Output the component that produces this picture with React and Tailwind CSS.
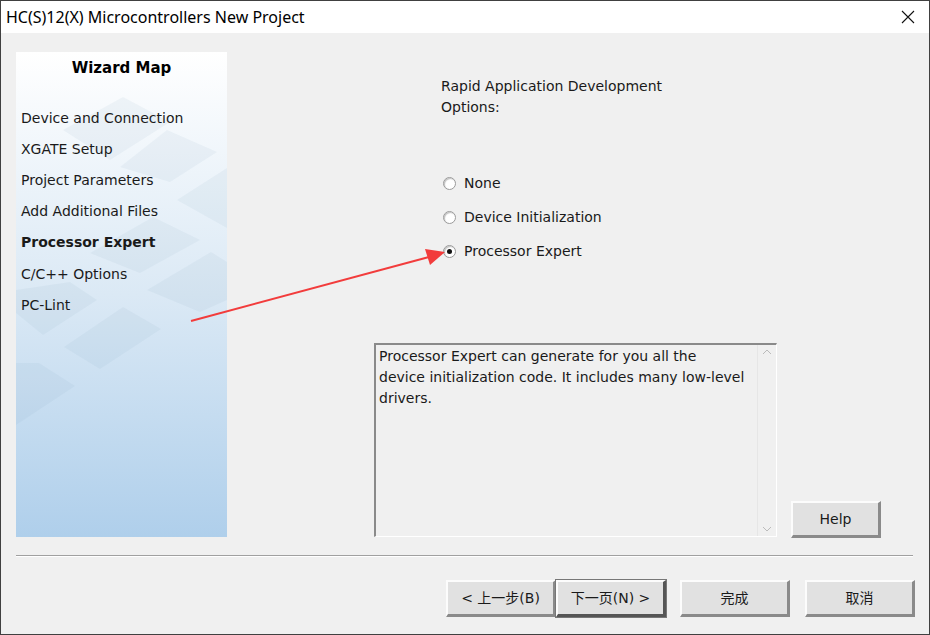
import React from "react";

/* ===============================
   WIZARD DIALOG — Processor Expert page
=============================== */
const ui = { fontFamily: "Tahoma, 'DejaVu Sans', 'Noto Sans CJK SC', sans-serif" };

const steps = [
  "Device and Connection",
  "XGATE Setup",
  "Project Parameters",
  "Add Additional Files",
  "Processor Expert",
  "C/C++ Options",
  "PC-Lint",
];

function Radio({ checked, label }) {
  return (
    <div className="flex items-center h-[20px]">
      <span className="w-[13px] h-[13px] rounded-full border border-[#9a9a9a] bg-white flex items-center justify-center shadow-[inset_1px_1px_1px_rgba(0,0,0,0.25)]">
        {checked && <span className="w-[5px] h-[5px] rounded-full bg-[#111]" />}
      </span>
      <span className="ml-[8px] text-[14px] text-[#1a1a1a]">{label}</span>
    </div>
  );
}

function Btn({ children, def, className = "" }) {
  return (
    <button
      className={
        "h-[37px] bg-[#e1e1e1] text-[14px] text-[#1a1a1a] border-[#fcfcfc] border-t-2 border-l-2 border-b-[3px] border-r-[3px] " +
        (def ? "border-b-[#555] border-r-[#555] outline outline-1 outline-[#777] " : "border-b-[#8a8a8a] border-r-[#8a8a8a] ") +
        className
      }
      style={ui}
    >
      {children}
    </button>
  );
}

function Diamonds() {
  const fill = "rgba(120,150,180,0.08)";
  const shapes = [
    "63,130 123,97 170,122 110,160",
    "120,167 167,130 217,152 170,182",
    "177,200 227,168 227,228",
    "90,253 153,217 200,240 140,273",
    "147,290 211,252 227,262 227,300 200,312",
    "16,313 43,335 97,300 70,282 16,290",
    "64,347 123,307 161,329 100,369",
    "16,363 39,363 75,386 16,425",
  ];
  return (
    <svg className="absolute inset-0" width="211" height="485" viewBox="16 52 211 485">
      {shapes.map((p, i) => (
        <polygon key={i} points={p} fill={fill} />
      ))}
    </svg>
  );
}

export default function App() {
  return (
    <div
      className="relative w-[930px] h-[635px] border border-[#404040] flex flex-col bg-[#f0f0f0] overflow-hidden"
      style={ui}
    >
      {/* TITLE BAR */}
      <div className="h-[32px] bg-white flex items-center justify-between shrink-0">
        <span className="pl-[5px] text-[16px] text-black" style={{ fontFamily: "'Segoe UI', 'Noto Sans', sans-serif" }}>
          HC(S)12(X) Microcontrollers New Project
        </span>
        <svg width="14" height="14" viewBox="0 0 14 14" className="mr-[14px]">
          <path d="M1 1 L13 13 M13 1 L1 13" stroke="#111" strokeWidth="1.1" />
        </svg>
      </div>

      {/* BODY */}
      <div className="flex pl-[15px] pt-[19px]">
        {/* WIZARD MAP */}
        <div className="relative w-[211px] h-[485px] bg-gradient-to-b from-white via-[#dbe9f5] to-[#afcfeb] shrink-0">
          <Diamonds />
          <div className="relative">
            <div className="text-center font-bold text-[15px] text-black pt-[5px]">Wizard Map</div>
            <div className="mt-[23px] pl-[5px]">
              {steps.map((s) => (
                <div
                  key={s}
                  className={"h-[31.2px] flex items-center text-[14px] text-[#1a1a1a] " + (s === "Processor Expert" ? "font-bold" : "")}
                >
                  {s}
                </div>
              ))}
            </div>
          </div>
        </div>

        {/* PAGE CONTENT */}
        <div className="relative flex-1 h-[485px]">
          <div className="ml-[214px] mt-[24px] text-[14px] leading-[21px] text-[#1a1a1a]">
            Rapid Application Development
            <br />
            Options:
          </div>
          <div className="ml-[216px] mt-[55px] flex flex-col gap-[14px]">
            <Radio label="None" />
            <Radio label="Device Initialization" />
            <Radio checked label="Processor Expert" />
          </div>

          <div className="flex items-end mt-[82px] ml-[147px]">
            <div className="w-[403px] h-[194px] border-t-2 border-l-2 border-[#8a8a8a] border-b border-r border-b-white border-r-white flex bg-[#f0f0f0]">
              <div className="flex-1 px-[3px] pt-[1px] text-[14px] leading-[21px] text-[#1a1a1a]">
                Processor Expert can generate for you all the
                <br />
                device initialization code. It includes many low-level
                <br />
                drivers.
              </div>
              <div className="w-[19px] flex flex-col justify-between items-center py-[4px] border-l border-[#e6e6e6]">
                <svg width="10" height="6" viewBox="0 0 10 6"><path d="M1 5 L5 1 L9 5" stroke="#bbb" fill="none" /></svg>
                <svg width="10" height="6" viewBox="0 0 10 6"><path d="M1 1 L5 5 L9 1" stroke="#bbb" fill="none" /></svg>
              </div>
            </div>
            <Btn className="w-[90px] h-[35px] ml-[14px] mb-[-1px]">Help</Btn>
          </div>
        </div>
      </div>

      {/* SEPARATOR */}
      <div className="ml-[15px] w-[897px] mt-[18px] border-t border-[#a0a0a0] border-b border-b-white" />

      {/* BUTTONS */}
      <div className="flex justify-end pr-[14px] mt-[23px]">
        <Btn className="w-[110px]">&lt; 上一步(B)</Btn>
        <Btn def className="w-[110px]">下一页(N) &gt;</Btn>
        <Btn className="w-[110px] ml-[14px]">完成</Btn>
        <Btn className="w-[110px] ml-[15px]">取消</Btn>
      </div>

      {/* RED ANNOTATION ARROW */}
      <svg className="absolute left-0 top-0 pointer-events-none" width="930" height="635">
        <line x1="190" y1="320" x2="428" y2="256" stroke="#f23c3c" strokeWidth="2" />
        <polygon points="444,251 424,248 429,264" fill="#f23c3c" />
      </svg>
    </div>
  );
}
